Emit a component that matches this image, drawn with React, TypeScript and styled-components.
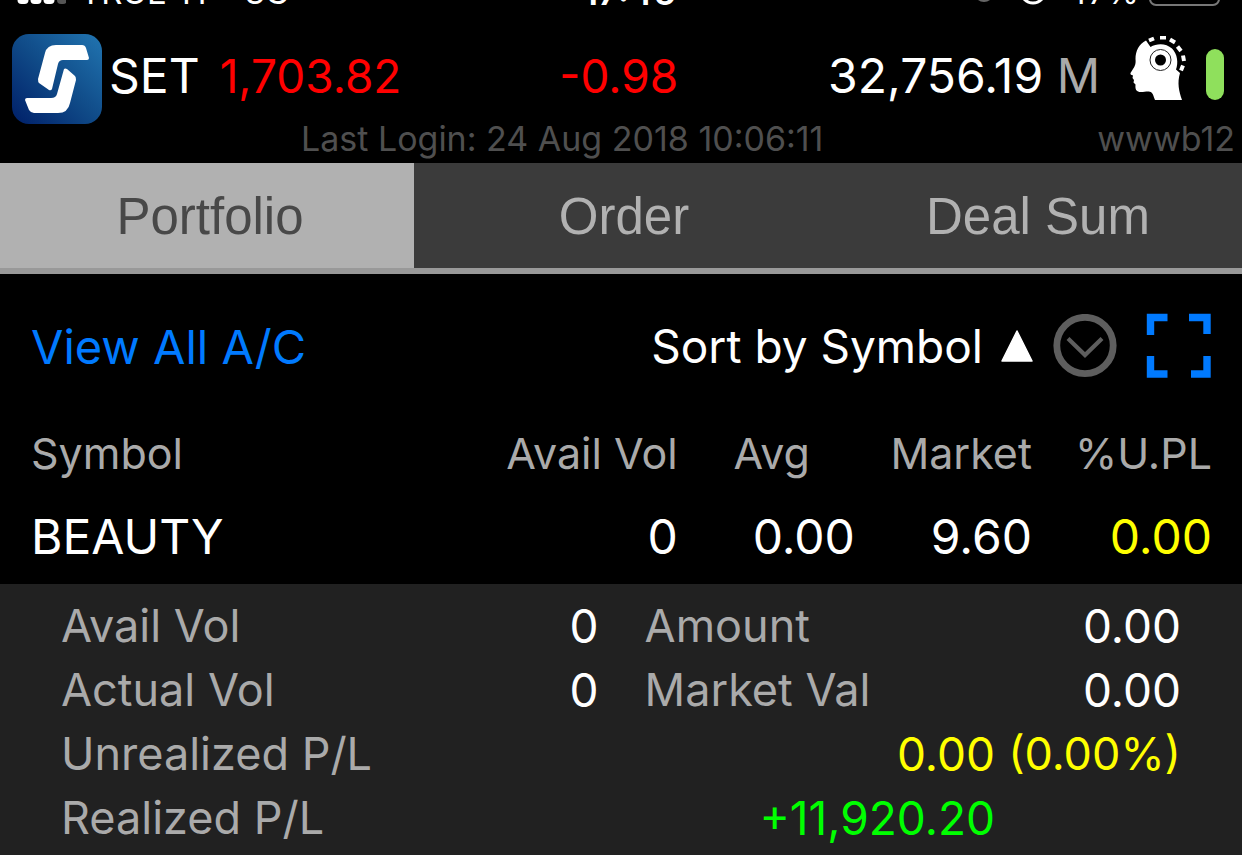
import React from "react";
import styled, { createGlobalStyle } from "styled-components";

const Global = createGlobalStyle`
  *, *::before, *::after { box-sizing: border-box; }
  body {
    margin: 0;
    background: #000;
    color: #fff;
    font-family: Inter, "Liberation Sans", sans-serif;
    overflow-x: hidden;
  }
  button {
    border: 0;
    padding: 0;
    margin: 0;
    background: none;
    font: inherit;
    color: inherit;
    cursor: pointer;
  }
  svg { display: block; }
`;

const Screen = styled.main`
  display: flex;
  flex-direction: column;
  min-height: 100vh;
  background: #000;
`;

const StatusBar = styled.div`
  display: grid;
  grid-template-columns: 1fr auto 1fr;
  align-items: end;
  align-content: end;
  height: 8px;
  padding: 0 21px 0 16px;
  overflow: hidden;
  font-size: 33px;
  line-height: 32px;
`;

const StatusGroup = styled.div<{ $end?: boolean }>`
  display: flex;
  align-items: flex-end;
  gap: ${(p) => (p.$end ? "10px" : "14px")};
  justify-content: ${(p) => (p.$end ? "flex-end" : "flex-start")};
  white-space: nowrap;
`;

const Network = styled.span`
  margin-left: 24px;
`;

const Clock = styled.time`
  padding-left: 22px;
  font-weight: 600;
  font-size: 36px;
`;

const Ticker = styled.header`
  display: grid;
  grid-template-columns: 90px auto 1fr auto auto auto;
  align-items: start;
  padding: 26px 18px 0 12px;
  font-size: 48px;
  line-height: 84px;
`;

const Index = styled.div`
  display: flex;
  gap: 20px;
  padding-left: 7px;
`;

const Red = styled.span`
  font-size: 46px;
  color: #f00;
`;

const Change = styled(Red)`
  padding-left: 8px;
  text-align: center;
`;

const Turnover = styled.span`
  text-align: right;
`;

const Unit = styled.span`
  color: #aaa;
`;

const Analysis = styled.span`
  margin: 2px 16px 0 30px;
`;

const Level = styled.span`
  width: 18px;
  height: 51px;
  margin-top: 15px;
  border-radius: 9px;
  background: #8fe05c;
`;

const Session = styled.div`
  display: grid;
  grid-template-columns: 5fr auto 7fr;
  height: 39px;
  padding: 0 7px;
  font-size: 34px;
  line-height: 30px;
  color: #4f4f4f;
`;

const Server = styled.span`
  text-align: right;
`;

const Tabs = styled.nav`
  display: grid;
  grid-template-columns: repeat(3, 1fr);
  border-bottom: 6px solid #999;
`;

const Tab = styled.button<{ $active?: boolean }>`
  height: 105px;
  padding: 2px 0 0 6px;
  font-family: "Liberation Sans", Arial, sans-serif;
  font-size: 51px;
  line-height: 60px;
  background: ${(p) => (p.$active ? "#b1b1b1" : "#3b3b3b")};
  color: ${(p) => (p.$active ? "#484848" : "#b1b1b1")};
`;

const Toolbar = styled.div`
  display: flex;
  align-items: center;
  height: 144px;
  padding: 0 30px 0 31px;
  font-size: 47px;
`;

const ViewAll = styled.a`
  margin-right: auto;
  color: #007aff;
  text-decoration: none;
`;

const SortButton = styled.button`
  display: flex;
  align-items: center;
  gap: 18px;
  font-size: 46px;
  margin-right: 29px;
`;

const Holdings = styled.table`
  width: 100%;
  border-collapse: collapse;
  table-layout: fixed;
`;

const Col = styled.col<{ $w?: string }>`
  width: ${(p) => p.$w ?? "auto"};
`;

const Head = styled.th<{ $left?: boolean; $inset?: boolean }>`
  height: 70px;
  padding: 0 ${(p) => (p.$inset ? "45px" : "0")} 0 0;
  text-align: ${(p) => (p.$left ? "left" : "right")};
  font-size: 43px;
  font-weight: 400;
  color: #aaa;
  white-space: nowrap;
`;

const Cell = styled.td<{ $left?: boolean; $color?: string }>`
  height: 96px;
  padding: 0;
  text-align: ${(p) => (p.$left ? "left" : "right")};
  font-size: 48px;
  color: ${(p) => p.$color ?? "#fff"};
`;

const TableWrap = styled.section`
  padding: 0 30px 0 31px;
`;

const Details = styled.dl`
  flex: 1;
  margin: 0;
  padding: 10px 61px 4px 61px;
  background: #212121;
  font-size: 46px;
  line-height: 64px;
`;

const DetailRow = styled.div`
  display: grid;
  grid-template-columns: 48% 52%;
`;

const Pair = styled.div<{ $second?: boolean }>`
  display: flex;
  justify-content: space-between;
  padding-left: ${(p) => (p.$second ? "46px" : "0")};
`;

const Total = styled.div`
  display: grid;
  grid-template-columns: 1fr auto 186px;
`;

const Term = styled.dt`
  font-size: 45px;
  color: #aaa;
`;

const Value = styled.dd<{ $color?: string; $small?: boolean }>`
  margin: 0;
  text-align: right;
  font-size: ${(p) => (p.$small ? "45px" : "46px")};
  color: ${(p) => p.$color ?? "#fff"};
`;

const SignalDots = () => (
  <svg width="50" height="8" viewBox="0 0 50 8" aria-hidden="true">
    {[7, 20, 33].map((x) => (
      <rect key={x} x={x - 5.5} y="-8" width="11" height="12" rx="4" fill="#fff" />
    ))}
    <rect x="41" y="-8" width="10" height="12" rx="4" fill="#555" />
  </svg>
);

const StatusIcons = () => (
  <svg width="85" height="8" viewBox="0 0 85 8" aria-hidden="true">
    <circle cx="12" cy="-8" r="10" fill="#666" />
    <circle cx="61" cy="-9" r="12" fill="none" stroke="#fff" strokeWidth="3" />
  </svg>
);

const Battery = () => (
  <svg width="72" height="8" viewBox="0 0 72 8" aria-hidden="true">
    <rect x="1" y="-24" width="69" height="29" rx="6" fill="none" stroke="#777" strokeWidth="2" />
  </svg>
);

const Logo = () => (
  <svg width="90" height="90" viewBox="0 0 90 90" role="img" aria-label="Streaming">
    <defs>
      <linearGradient id="logo" x1="0" y1="1" x2="1" y2="0">
        <stop offset="0" stopColor="#001f68" />
        <stop offset=".5" stopColor="#104b88" />
        <stop offset="1" stopColor="#2175b1" />
      </linearGradient>
    </defs>
    <rect width="90" height="90" rx="17" fill="url(#logo)" />
    <path d="M44 11H70Q73 11 74 14L77 24Q77 26 75 26H51Q47 26 46 30L40 55Q39 57 37 56L27 49Q26 48 26 45L33 19Q35 11 44 11Z" fill="#fff" />
    <path d="M52 35Q53 34 55 35L63 42Q64 43 64 46L58 69Q56 79 46 79H22Q19 79 17 76L13 66Q13 64 15 64H39Q44 64 45 60Z" fill="#fff" />
  </svg>
);

const MindIcon = () => (
  <svg width="60" height="64" viewBox="0 0 60 64" role="img" aria-label="Analysis">
    <path
      d="M16 4.500C9 8 5.500 15 5.500 23C6 28 5 30 3 33L.5 37C0 38.500 1.500 39 3 39.500L2.500 42L4 44L3.500 46.500L5.500 48.500C5 54 6.500 56 11 56C15 56 19 54.500 21.500 56.500C23.500 58 23.500 61 25 64H52C49 55 47 47 50 37L46 33.500C48.500 27 47.500 18 42 12.500C36 7 27 7 20.500 11Z"
      fill="#fff"
    />
    <circle cx="30.500" cy="24" r="10.500" fill="none" stroke="#222" strokeWidth="1" />
    <circle cx="30.500" cy="24" r="5.500" fill="#000" />
    <path
      d="M19 4.500L24 2.500M30 1.500H36M40 3.500L45 6.500M47.500 10.500L51 15M53 19.500L54 25M53 29.500L51 34.500"
      fill="none"
      stroke="#fff"
      strokeWidth="4"
    />
  </svg>
);

const Triangle = () => (
  <svg width="34" height="32" viewBox="0 0 34 32" aria-hidden="true">
    <path d="M16 1L31 31H1Z" fill="#fff" stroke="#fff" strokeWidth="1.5" strokeLinejoin="round" />
  </svg>
);

const CircleDown = () => (
  <svg width="64" height="64" viewBox="0 0 64 64" aria-hidden="true">
    <circle cx="32" cy="31.500" r="28.200" fill="none" stroke="#5e5e5e" strokeWidth="6.800" />
    <path d="M15 24.500L32 41L49 24.500" fill="none" stroke="#5e5e5e" strokeWidth="4.200" />
  </svg>
);

const Expand = () => (
  <svg width="66" height="66" viewBox="0 0 66 66" fill="none" stroke="#007aff" strokeWidth="7.400" aria-hidden="true">
    <path d="M4.500 22V4.500H21.500M43 4.500H61V21M4.500 43V61H21.500M45 61H61V43" />
  </svg>
);

const details = [
  ["Avail Vol", "0", "Amount", "0.00"],
  ["Actual Vol", "0", "Market Val", "0.00"],
];

export default function App() {
  return (
    <Screen>
      <Global />
      <StatusBar>
        <StatusGroup>
          <SignalDots />
          <span>TRUE-H</span>
          <Network>3G</Network>
        </StatusGroup>
        <Clock>17:46</Clock>
        <StatusGroup $end>
          <StatusIcons />
          <span>47%</span>
          <Battery />
        </StatusGroup>
      </StatusBar>

      <Ticker>
        <Logo />
        <Index>
          <span>SET</span>
          <Red>1,703.82</Red>
        </Index>
        <Change>-0.98</Change>
        <Turnover>
          32,756.19 <Unit>M</Unit>
        </Turnover>
        <Analysis>
          <MindIcon />
        </Analysis>
        <Level />
      </Ticker>
      <Session>
        <span />
        <span>Last Login: 24 Aug 2018 10:06:11</span>
        <Server>wwwb12</Server>
      </Session>

      <Tabs>
        <Tab $active>Portfolio</Tab>
        <Tab>Order</Tab>
        <Tab>Deal Sum</Tab>
      </Tabs>

      <Toolbar>
        <ViewAll href="#all">View All A/C</ViewAll>
        <SortButton>
          <span>Sort by Symbol</span>
          <Triangle />
          <CircleDown />
        </SortButton>
        <button aria-label="Full screen">
          <Expand />
        </button>
      </Toolbar>

      <TableWrap>
        <Holdings>
          <colgroup>
            <Col />
            <Col $w="200px" />
            <Col $w="15%" />
            <Col $w="15%" />
            <Col $w="180px" />
          </colgroup>
          <thead>
            <tr>
              <Head $left>Symbol</Head>
              <Head>Avail Vol</Head>
              <Head $inset>Avg</Head>
              <Head>Market</Head>
              <Head>%U.PL</Head>
            </tr>
          </thead>
          <tbody>
            <tr>
              <Cell $left>BEAUTY</Cell>
              <Cell>0</Cell>
              <Cell>0.00</Cell>
              <Cell>9.60</Cell>
              <Cell $color="#ff0">0.00</Cell>
            </tr>
          </tbody>
        </Holdings>
      </TableWrap>

      <Details>
        {details.map(([a, av, b, bv]) => (
          <DetailRow key={a}>
            <Pair>
              <Term>{a}</Term>
              <Value>{av}</Value>
            </Pair>
            <Pair $second>
              <Term>{b}</Term>
              <Value>{bv}</Value>
            </Pair>
          </DetailRow>
        ))}
        <Total>
          <Term>Unrealized P/L</Term>
          <Value $color="#ff0">0.00</Value>
          <Value $color="#ff0" $small>(0.00%)</Value>
        </Total>
        <Total>
          <Term>Realized P/L</Term>
          <Value $color="#0f0">+11,920.20</Value>
        </Total>
      </Details>
    </Screen>
  );
}
